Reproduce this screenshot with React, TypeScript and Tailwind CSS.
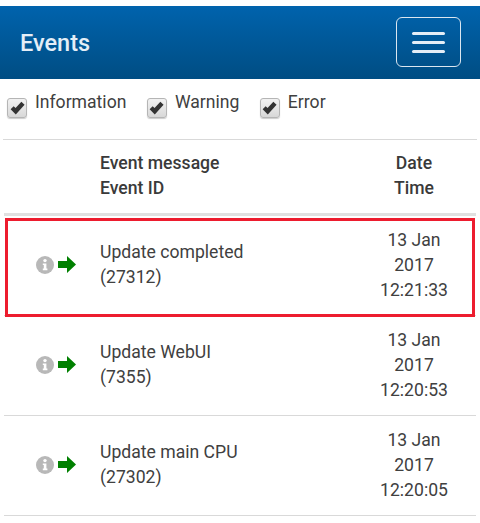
import React from "react";

const rows = [
  { id: "27312", msg: "Update completed", time: "12:21:33", highlight: true },
  { id: "7355", msg: "Update WebUI", time: "12:20:53" },
  { id: "27302", msg: "Update main CPU", time: "12:20:05" },
];

const Check = ({ label }: { label: string }) => (
  <label className="flex items-start">
    <span className="mt-[8px] flex h-[20px] w-[20px] items-center justify-center rounded-[3px] border border-[#b5b5b5] bg-gradient-to-b from-[#f2f2f2] to-[#d8d8d8] shadow-[0_1px_1px_rgba(0,0,0,0.2)]">
      <svg width="15" height="14" viewBox="0 0 14 13">
        <path d="M0.6 7.6 L3.4 4.8 L5.2 6.6 L10.6 0.6 L13.6 3.4 L5.4 12.6 Z" fill="#333" />
      </svg>
    </span>
    <span className="ml-[8px] leading-[24px]">{label}</span>
  </label>
);

const InfoIcon = () => (
  <svg width="18" height="18" viewBox="0 0 18 18">
    <circle cx="9" cy="9" r="9" fill="#b8b8b8" />
    <circle cx="9" cy="4.6" r="1.7" fill="#fff" />
    <path d="M6.8 7.4 H10.4 V12.6 H11.4 V14.2 H6.8 V12.6 H7.8 V9 H6.8 Z" fill="#fff" />
  </svg>
);

const ArrowIcon = () => (
  <svg width="18" height="17" viewBox="0 0 18 17">
    <path d="M0 5 H9 V0 L18 8.5 L9 17 V12 H0 Z" fill="#008000" />
  </svg>
);

export default function App() {
  return (
    <div className="relative h-[523px] w-[480px] overflow-hidden bg-white pt-[6px] font-['Roboto',sans-serif] text-[17.6px] text-[#404040]">
      <header className="flex h-[73px] items-center justify-between bg-gradient-to-b from-[#0063ad] to-[#004d83] pl-[20px] pr-[19px]">
        <h1 className="mt-[3px] text-[23.5px] font-medium text-[#e4eef7]">Events</h1>
        <button className="-mt-[1px] flex h-[50px] w-[65px] flex-col items-center justify-center gap-[6px] rounded-[6px] border border-[#dbe6f0]">
          <span className="h-[3px] w-[33px] rounded-full bg-[#e4eef7]" />
          <span className="h-[3px] w-[33px] rounded-full bg-[#e4eef7]" />
          <span className="h-[3px] w-[33px] rounded-full bg-[#e4eef7]" />
        </button>
      </header>

      <div className="mx-[3px] flex h-[61px] gap-[20.5px] border-b border-[#d9d9d9] pl-[4px] pt-[11px]">
        <Check label="Information" />
        <Check label="Warning" />
        <Check label="Error" />
      </div>

      <div className="mx-[4px] flex h-[76px] items-center border-b-[3px] border-[#e0e0e0] pb-[1px] font-medium text-[#3a3a3a]">
        <div className="w-[96px]" />
        <div className="flex-1 leading-[25px]">
          <div>Event message</div>
          <div>Event ID</div>
        </div>
        <div className="w-[100px] pr-[24px] text-center leading-[25px]">
          <div>Date</div>
          <div>Time</div>
        </div>
      </div>

      {rows.map((r) => (
        <div key={r.id} className="mx-[4px] flex h-[100px] items-center border-b border-[#d9d9d9]">
          <div className="flex w-[96px] items-center justify-end gap-[4px] pb-[2px] pr-[24px]">
            <InfoIcon />
            <ArrowIcon />
          </div>
          <div className="flex-1 pb-[2px] leading-[25px]">
            <div>{r.msg}</div>
            <div>({r.id})</div>
          </div>
          <div className="w-[100px] pr-[24px] text-center leading-[25px]">
            <div>13 Jan</div>
            <div>2017</div>
            <div>{r.time}</div>
          </div>
        </div>
      ))}

      <div className="absolute left-[5px] top-[218px] h-[99px] w-[470px] border-[3px] border-[#ed1c2e]" />
    </div>
  );
}
